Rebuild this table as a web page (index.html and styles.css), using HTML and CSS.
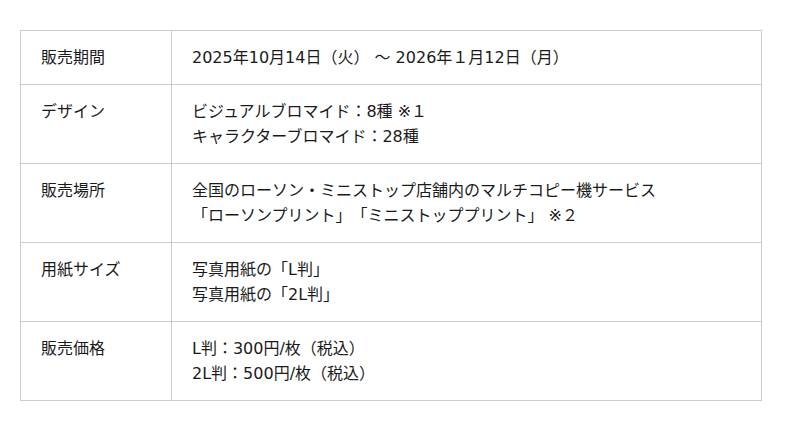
FILE: index.html
```html
<!DOCTYPE html>
<html lang="ja">
<head>
<meta charset="utf-8">
<link rel="stylesheet" href="styles.css">
</head>
<body>
<table class="info">
  <tr>
    <th>販売期間</th>
    <td>2025年10月14日（火） ～ 2026年１月12日（月）</td>
  </tr>
  <tr>
    <th>デザイン</th>
    <td>ビジュアルブロマイド：8種 ※１<br>キャラクターブロマイド：28種</td>
  </tr>
  <tr>
    <th>販売場所</th>
    <td>全国のローソン・ミニストップ店舗内のマルチコピー機サービス<br>「ローソンプリント」「ミニストッププリント」 ※２</td>
  </tr>
  <tr>
    <th>用紙サイズ</th>
    <td>写真用紙の「L判」<br>写真用紙の「2L判」</td>
  </tr>
  <tr>
    <th>販売価格</th>
    <td>L判：300円/枚（税込）<br>2L判：500円/枚（税込）</td>
  </tr>
</table>
</body>
</html>
```
FILE: styles.css
```css
html, body {
  margin: 0;
  background: #fff;
}
body {
  padding: 30px 20px;
  font-family: "DejaVu Sans", "Noto Sans CJK JP", sans-serif;
  font-size: 16px;
  color: #1a1a1a;
  text-spacing-trim: space-all;
}
.info {
  width: 742px;
  border-collapse: collapse;
}
.info th, .info td {
  border: 1px solid #cccccc;
  padding: 14px 20px;
  line-height: 25px;
  text-align: left;
  vertical-align: top;
  font-weight: normal;
}
.info th {
  width: 110px;
}
```
